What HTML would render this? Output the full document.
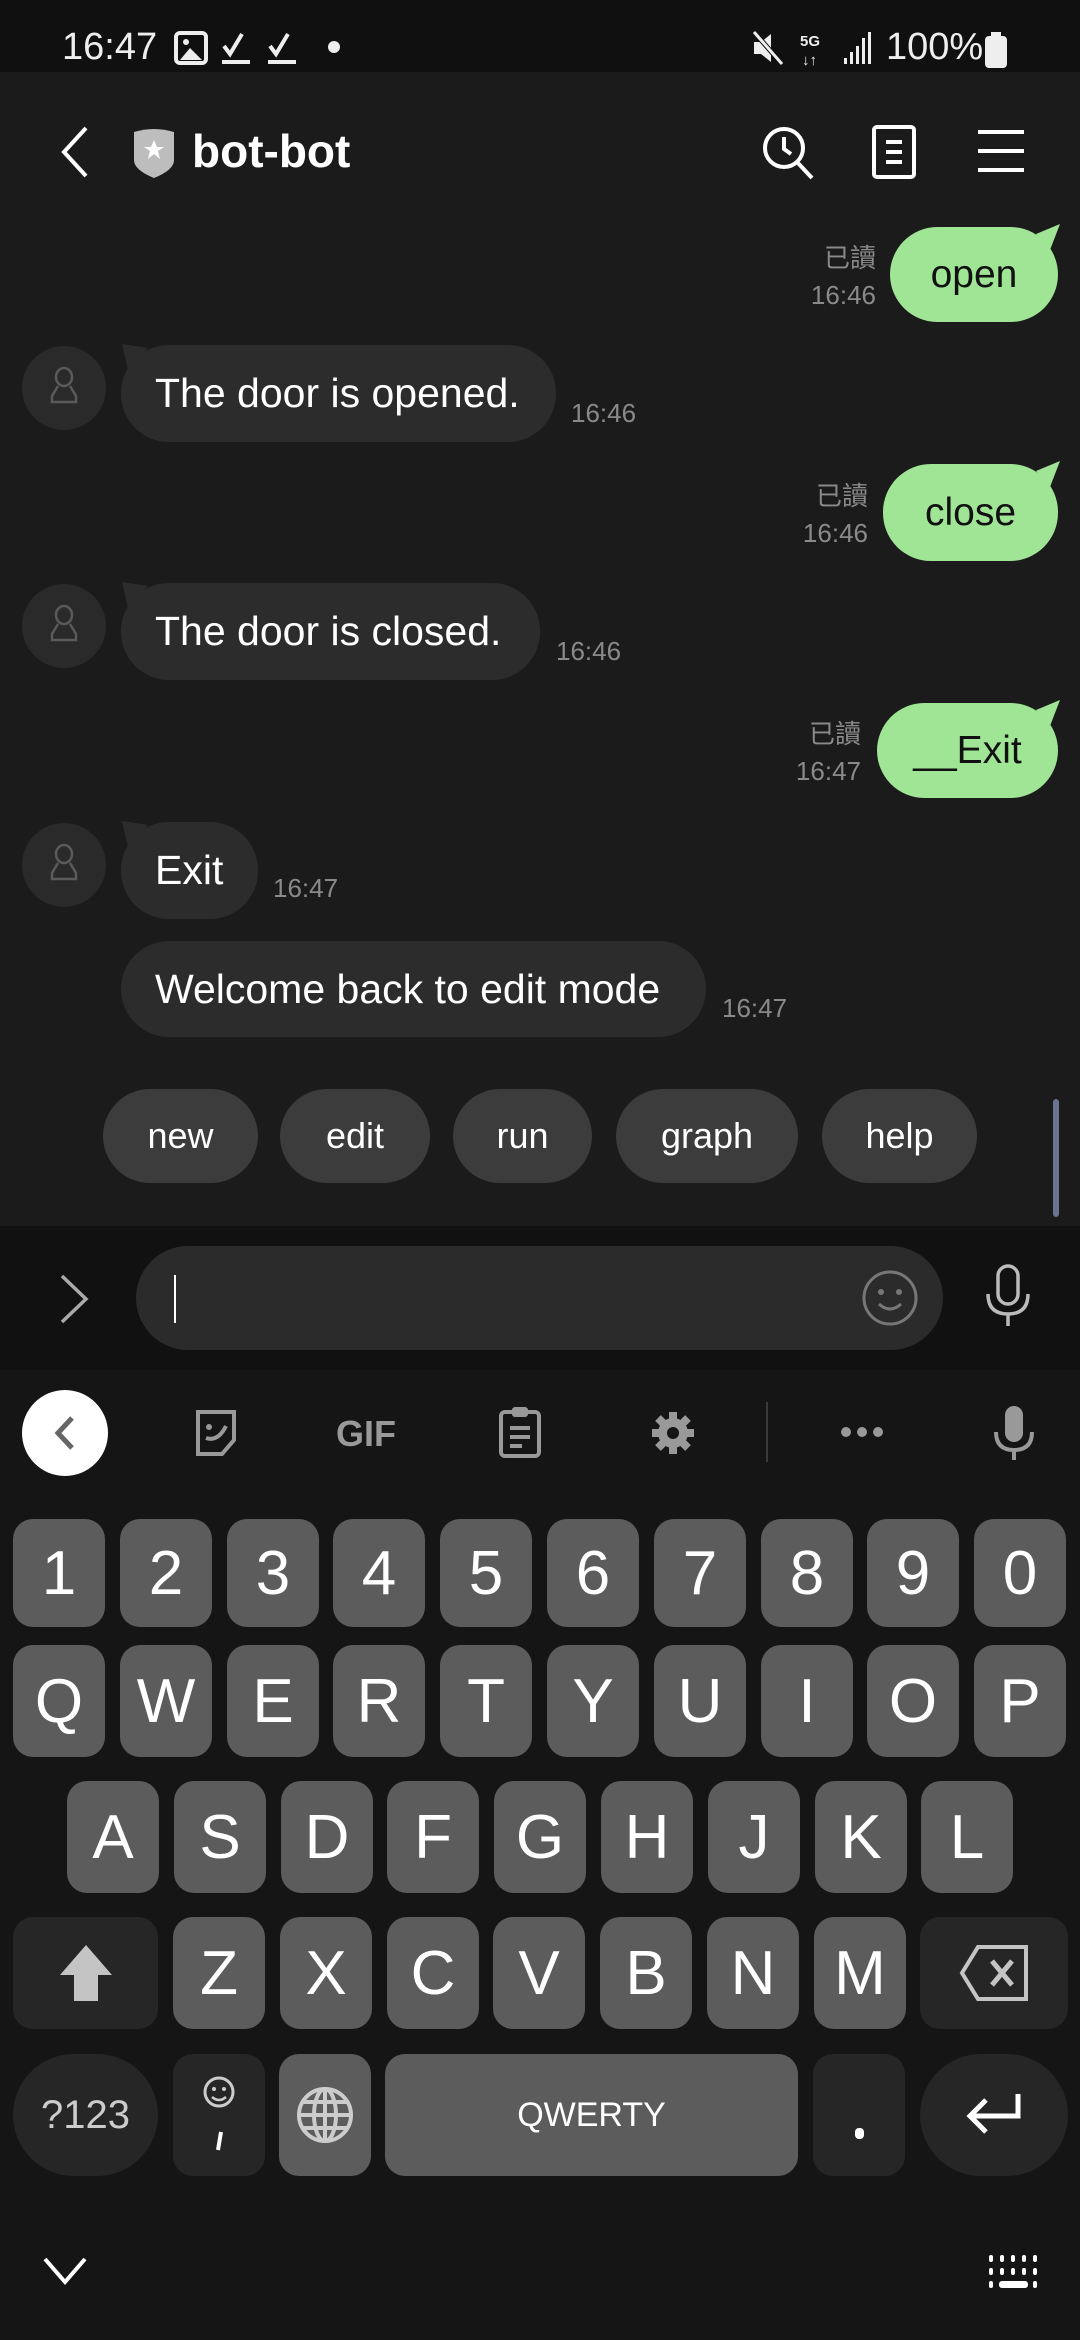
<!DOCTYPE html>
<html><head><meta charset="utf-8"><style>
*{margin:0;padding:0;box-sizing:border-box}
body{width:1080px;height:2340px;background:#1b1b1b;position:relative;overflow:hidden;font-family:"Liberation Sans","Noto Sans CJK TC",sans-serif;color:#fff}
.a{position:absolute}
.status{left:0;top:0;width:1080px;height:72px;background:#101010}
.bub{position:absolute;border-radius:48px;display:flex;align-items:center;justify-content:center;font-size:39px}
.me{background:#a0e596;color:#111}
.bot{background:#2c2c2c;color:#fff;justify-content:flex-start;padding-left:34px;font-size:41px}
.meta{position:absolute;text-align:right;color:#8a8a8a;font-size:26px;line-height:37px}
.t{position:absolute;color:#8a8a8a;font-size:26px}
.av{position:absolute;width:84px;height:84px;border-radius:50%;background:#2a2a2a}
.qr{position:absolute;top:1089px;height:94px;border-radius:47px;background:#3c3c3c;display:flex;align-items:center;justify-content:center;font-size:36px}
.k{position:absolute;width:92px;border-radius:20px;background:#5c5c5c;display:flex;align-items:center;justify-content:center;font-size:62px;color:#fff}
.r1{top:1519px;height:108px}.r2{top:1645px;height:112px}.r3{top:1781px;height:112px}.r4{top:1917px;height:112px}.r5{top:2054px;height:122px}
.sp{background:#262626}
</style></head><body>
<div class="a status"></div>
<div class="a" style="left:62px;top:26px;font-size:38px;color:#eee">16:47</div>
<svg class="a" style="left:172px;top:30px" width="160" height="40" viewBox="0 0 160 40">
<rect x="4" y="3" width="30" height="30" rx="4" fill="none" stroke="#eee" stroke-width="4"/><path d="M8 30 L18 18 L30 30Z" fill="#eee"/><circle cx="14" cy="12" r="3" fill="#eee"/>
<path d="M52 16 L58 24 L70 4" stroke="#eee" stroke-width="4" fill="none"/><rect x="50" y="30" width="28" height="4" fill="#eee"/>
<path d="M98 16 L104 24 L116 4" stroke="#eee" stroke-width="4" fill="none"/><rect x="96" y="30" width="28" height="4" fill="#eee"/>
</svg>
<div class="a" style="left:328px;top:41px;width:12px;height:12px;border-radius:6px;background:#eee"></div>
<svg class="a" style="left:750px;top:28px" width="250" height="40" viewBox="0 0 250 40">
<path d="M4 14h7l10-8v28l-10-8H4z" fill="#eee"/><path d="M4 4 L32 36" stroke="#101010" stroke-width="5"/><path d="M4 4 L32 36" stroke="#eee" stroke-width="3"/>
<text x="50" y="18" font-size="15" font-weight="bold" fill="#eee" font-family="Liberation Sans">5G</text><text x="52" y="37" font-size="15" fill="#eee" font-family="Liberation Sans">↓↑</text>
<rect x="94" y="30" width="3" height="6" fill="#eee"/><rect x="100" y="24" width="3" height="12" fill="#eee"/><rect x="106" y="18" width="3" height="18" fill="#eee"/><rect x="112" y="10" width="3" height="26" fill="#eee"/><rect x="118" y="4" width="3" height="32" fill="#eee"/>
</svg>
<div class="a" style="left:886px;top:26px;font-size:38px;color:#eee">100%</div>
<div class="a" style="left:985px;top:36px;width:22px;height:32px;border-radius:4px;background:#eee"></div>
<div class="a" style="left:991px;top:32px;width:10px;height:6px;background:#eee"></div>

<svg class="a" style="left:56px;top:124px" width="36" height="56"><path d="M30 4 L8 28 L30 52" stroke="#fff" stroke-width="4" fill="none"/></svg>
<svg class="a" style="left:132px;top:126px" width="44" height="52" viewBox="0 0 44 52"><path d="M2 6 Q22 0 42 6 V34 Q42 44 22 52 Q2 44 2 34Z" fill="#bdbdbd"/><path d="M22 14l3 7h7l-6 4 2 8-6-5-6 5 2-8-6-4h7z" fill="#fff"/></svg>
<div class="a" style="left:192px;top:124px;font-size:46px;font-weight:bold">bot-bot</div>
<svg class="a" style="left:760px;top:124px" width="58" height="58" viewBox="0 0 58 58"><circle cx="24" cy="24" r="19" stroke="#fff" stroke-width="4" fill="none"/><path d="M24 13 V25 L31 30" stroke="#fff" stroke-width="4" fill="none"/><path d="M37 38 L52 54" stroke="#fff" stroke-width="4"/></svg>
<svg class="a" style="left:870px;top:124px" width="50" height="56" viewBox="0 0 50 56"><rect x="4" y="3" width="40" height="50" rx="3" stroke="#fff" stroke-width="4" fill="none"/><path d="M16 18h16M16 28h16M16 38h16" stroke="#fff" stroke-width="4"/></svg>
<svg class="a" style="left:976px;top:126px" width="50" height="50"><path d="M2 6h46M2 25h46M2 44h46" stroke="#fff" stroke-width="4"/></svg>

<div class="meta" style="left:790px;top:240px;width:86px">已讀<br>16:46</div>
<div class="bub me" style="left:890px;top:227px;width:168px;height:95px">open</div>
<svg class="a" style="left:1036px;top:224px" width="24" height="28"><path d="M0 10 L24 0 L14 26Z" fill="#a0e596"/></svg>

<div class="av" style="left:22px;top:346px"></div>
<svg class="a" style="left:48px;top:366px" width="32" height="44" viewBox="0 0 32 44"><path d="M16 2a8 9 0 1 1 0 18a8 9 0 1 1 0-18zM10 20 L4 30 V36 H28 V30 L22 20" stroke="#5a5a5a" stroke-width="2.5" fill="none"/></svg>
<svg class="a" style="left:120px;top:344px" width="28" height="28"><path d="M2 0 L28 4 L8 26Z" fill="#2c2c2c"/></svg>
<div class="bub bot" style="left:121px;top:345px;width:435px;height:97px">The door is opened.</div>
<div class="t" style="left:571px;top:398px">16:46</div>

<div class="meta" style="left:782px;top:478px;width:86px">已讀<br>16:46</div>
<div class="bub me" style="left:883px;top:464px;width:175px;height:97px">close</div>
<svg class="a" style="left:1036px;top:461px" width="24" height="28"><path d="M0 10 L24 0 L14 26Z" fill="#a0e596"/></svg>

<div class="av" style="left:22px;top:584px"></div>
<svg class="a" style="left:48px;top:604px" width="32" height="44" viewBox="0 0 32 44"><path d="M16 2a8 9 0 1 1 0 18a8 9 0 1 1 0-18zM10 20 L4 30 V36 H28 V30 L22 20" stroke="#5a5a5a" stroke-width="2.5" fill="none"/></svg>
<svg class="a" style="left:120px;top:582px" width="28" height="28"><path d="M2 0 L28 4 L8 26Z" fill="#2c2c2c"/></svg>
<div class="bub bot" style="left:121px;top:583px;width:419px;height:97px">The door is closed.</div>
<div class="t" style="left:556px;top:636px">16:46</div>

<div class="meta" style="left:775px;top:716px;width:86px">已讀<br>16:47</div>
<div class="bub me" style="left:877px;top:703px;width:181px;height:95px">__Exit</div>
<svg class="a" style="left:1036px;top:700px" width="24" height="28"><path d="M0 10 L24 0 L14 26Z" fill="#a0e596"/></svg>

<div class="av" style="left:22px;top:823px"></div>
<svg class="a" style="left:48px;top:843px" width="32" height="44" viewBox="0 0 32 44"><path d="M16 2a8 9 0 1 1 0 18a8 9 0 1 1 0-18zM10 20 L4 30 V36 H28 V30 L22 20" stroke="#5a5a5a" stroke-width="2.5" fill="none"/></svg>
<svg class="a" style="left:120px;top:821px" width="28" height="28"><path d="M2 0 L28 4 L8 26Z" fill="#2c2c2c"/></svg>
<div class="bub bot" style="left:121px;top:822px;width:137px;height:97px">Exit</div>
<div class="t" style="left:273px;top:873px">16:47</div>

<div class="bub bot" style="left:121px;top:941px;width:585px;height:96px">Welcome back to edit mode</div>
<div class="t" style="left:722px;top:993px">16:47</div>

<div class="qr" style="left:103px;width:155px">new</div>
<div class="qr" style="left:280px;width:150px">edit</div>
<div class="qr" style="left:453px;width:139px">run</div>
<div class="qr" style="left:616px;width:182px">graph</div>
<div class="qr" style="left:822px;width:155px">help</div>
<div class="a" style="left:1053px;top:1099px;width:6px;height:118px;border-radius:3px;background:#6a7490"></div>

<div class="a" style="left:0;top:1226px;width:1080px;height:144px;background:#111"></div>
<svg class="a" style="left:58px;top:1274px" width="34" height="50"><path d="M4 2 L28 25 L4 48" stroke="#aaa" stroke-width="3.5" fill="none"/></svg>
<div class="a" style="left:136px;top:1246px;width:807px;height:104px;border-radius:52px;background:#2b2b2b"></div>
<div class="a" style="left:174px;top:1275px;width:2px;height:48px;background:#fff"></div>
<svg class="a" style="left:860px;top:1268px" width="60" height="60"><circle cx="30" cy="30" r="26" stroke="#777" stroke-width="3" fill="none"/><circle cx="21" cy="24" r="3" fill="#777"/><circle cx="39" cy="24" r="3" fill="#777"/><path d="M19 36 Q30 46 41 36" stroke="#777" stroke-width="3" fill="none"/></svg>
<svg class="a" style="left:982px;top:1264px" width="52" height="64"><rect x="16" y="2" width="20" height="38" rx="10" stroke="#bbb" stroke-width="3.5" fill="none"/><path d="M6 30 Q6 50 26 50 Q46 50 46 30 M26 50 V62" stroke="#bbb" stroke-width="3.5" fill="none"/></svg>

<div class="a" style="left:0;top:1370px;width:1080px;height:970px;background:#151515"></div>
<div class="a" style="left:22px;top:1390px;width:86px;height:86px;border-radius:50%;background:#fff"></div>
<svg class="a" style="left:50px;top:1414px" width="30" height="38"><path d="M22 4 L8 19 L22 34" stroke="#666" stroke-width="5" fill="none"/></svg>
<svg class="a" style="left:192px;top:1408px" width="50" height="50" viewBox="0 0 50 50"><path d="M6 4h36v28L30 46H6z" stroke="#999" stroke-width="4" fill="none"/><circle cx="17" cy="19" r="3" fill="#999"/><path d="M14 30 Q26 34 34 18" stroke="#999" stroke-width="4" fill="none"/></svg>
<div class="a" style="left:336px;top:1413px;font-size:36px;font-weight:bold;color:#999">GIF</div>
<svg class="a" style="left:497px;top:1404px" width="46" height="56" viewBox="0 0 46 56"><rect x="4" y="8" width="38" height="44" rx="4" stroke="#999" stroke-width="4" fill="none"/><rect x="15" y="3" width="16" height="10" rx="3" fill="#999"/><path d="M13 24h20M13 33h20M13 42h12" stroke="#999" stroke-width="4"/></svg>
<svg class="a" style="left:650px;top:1410px" width="46" height="46" viewBox="0 0 46 46"><circle cx="23" cy="23" r="15" fill="#999"/><path d="M23 2v42M2 23h42M8 8l30 30M38 8L8 38" stroke="#999" stroke-width="8"/><circle cx="23" cy="23" r="6" fill="#151515"/></svg>
<div class="a" style="left:766px;top:1402px;width:2px;height:60px;background:#3a3a3a"></div>
<svg class="a" style="left:840px;top:1424px" width="44" height="16"><circle cx="6" cy="8" r="5" fill="#999"/><circle cx="22" cy="8" r="5" fill="#999"/><circle cx="38" cy="8" r="5" fill="#999"/></svg>
<svg class="a" style="left:992px;top:1404px" width="44" height="58"><rect x="13" y="2" width="18" height="36" rx="9" fill="#999"/><path d="M4 28 Q4 46 22 46 Q40 46 40 28 M22 46 V56" stroke="#999" stroke-width="4" fill="none"/></svg>

<div class="k r1" style="left:13px">1</div><div class="k r1" style="left:120px">2</div><div class="k r1" style="left:227px">3</div><div class="k r1" style="left:333px">4</div><div class="k r1" style="left:440px">5</div><div class="k r1" style="left:547px">6</div><div class="k r1" style="left:654px">7</div><div class="k r1" style="left:761px">8</div><div class="k r1" style="left:867px">9</div><div class="k r1" style="left:974px">0</div>
<div class="k r2" style="left:13px">Q</div><div class="k r2" style="left:120px">W</div><div class="k r2" style="left:227px">E</div><div class="k r2" style="left:333px">R</div><div class="k r2" style="left:440px">T</div><div class="k r2" style="left:547px">Y</div><div class="k r2" style="left:654px">U</div><div class="k r2" style="left:761px">I</div><div class="k r2" style="left:867px">O</div><div class="k r2" style="left:974px">P</div>
<div class="k r3" style="left:67px">A</div><div class="k r3" style="left:174px">S</div><div class="k r3" style="left:281px">D</div><div class="k r3" style="left:387px">F</div><div class="k r3" style="left:494px">G</div><div class="k r3" style="left:601px">H</div><div class="k r3" style="left:708px">J</div><div class="k r3" style="left:815px">K</div><div class="k r3" style="left:921px">L</div>
<div class="k r4 sp" style="left:13px;width:145px"><svg width="60" height="64"><path d="M30 4 L56 34 H42 V60 H18 V34 H4Z" fill="#c4c4c4"/></svg></div>
<div class="k r4" style="left:173px">Z</div><div class="k r4" style="left:280px">X</div><div class="k r4" style="left:387px">C</div><div class="k r4" style="left:493px">V</div><div class="k r4" style="left:600px">B</div><div class="k r4" style="left:707px">N</div><div class="k r4" style="left:814px">M</div>
<div class="k r4 sp" style="left:920px;width:148px"><svg width="72" height="60" viewBox="0 0 72 60"><path d="M20 4H68V56H20L4 30Z" stroke="#c4c4c4" stroke-width="4" fill="none"/><path d="M34 18L54 42M54 18L34 42" stroke="#c4c4c4" stroke-width="5"/></svg></div>
<div class="k r5 sp" style="left:13px;width:145px;border-radius:61px;font-size:40px;color:#ccc">?123</div>
<div class="k r5 sp" style="left:173px"><svg width="40" height="90"><circle cx="20" cy="22" r="14" stroke="#ccc" stroke-width="3" fill="none"/><circle cx="15" cy="19" r="2" fill="#ccc"/><circle cx="25" cy="19" r="2" fill="#ccc"/><path d="M13 27 Q20 33 27 27" stroke="#ccc" stroke-width="2.5" fill="none"/><path d="M22 62 L19 80" stroke="#fff" stroke-width="4"/></svg></div>
<div class="k r5" style="left:279px"><svg width="60" height="60" viewBox="0 0 60 60"><circle cx="30" cy="30" r="26" stroke="#ccc" stroke-width="4" fill="none"/><ellipse cx="30" cy="30" rx="11" ry="26" stroke="#ccc" stroke-width="4" fill="none"/><path d="M4 30h52M30 4v52M8 17h44M8 43h44" stroke="#ccc" stroke-width="4"/></svg></div>
<div class="k r5" style="left:385px;width:413px;font-size:34px">QWERTY</div>
<div class="k r5 sp" style="left:813px"><div style="width:9px;height:11px;border-radius:4px;background:#fff;margin-top:36px"></div></div>
<div class="k r5 sp" style="left:920px;width:148px;border-radius:61px"><svg width="60" height="50"><path d="M54 4V26H8M22 10L6 26L22 42" stroke="#fff" stroke-width="5" fill="none"/></svg></div>

<svg class="a" style="left:42px;top:2256px" width="46" height="30"><path d="M3 3 L23 26 L43 3" stroke="#fff" stroke-width="4" fill="none"/></svg>
<svg class="a" style="left:988px;top:2254px" width="52" height="36" viewBox="0 0 52 36"><g fill="#fff"><rect x="1" y="1" width="4" height="7" rx="2"/><rect x="12" y="1" width="4" height="7" rx="2"/><rect x="23" y="1" width="4" height="7" rx="2"/><rect x="34" y="1" width="4" height="7" rx="2"/><rect x="45" y="1" width="4" height="7" rx="2"/><rect x="1" y="14" width="4" height="7" rx="2"/><rect x="12" y="14" width="4" height="7" rx="2"/><rect x="23" y="14" width="4" height="7" rx="2"/><rect x="34" y="14" width="4" height="7" rx="2"/><rect x="45" y="14" width="4" height="7" rx="2"/><rect x="1" y="27" width="4" height="7" rx="2"/><rect x="11" y="27" width="29" height="7" rx="3"/><rect x="45" y="27" width="4" height="7" rx="2"/></g></svg>
</body></html>
